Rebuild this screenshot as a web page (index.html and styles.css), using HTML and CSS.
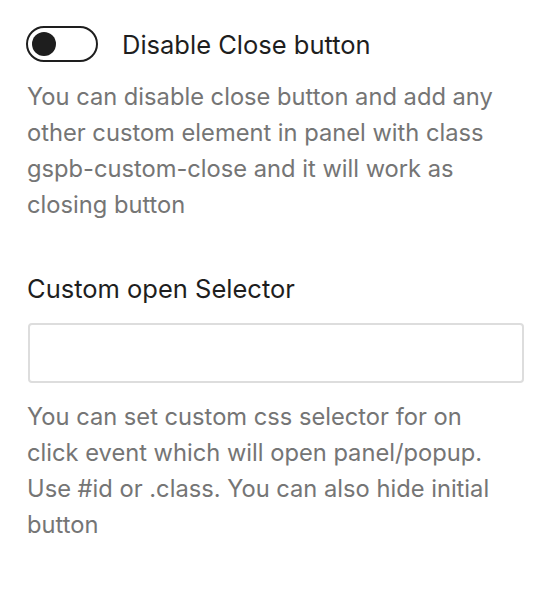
FILE: index.html
```html
<!DOCTYPE html>
<html lang="en">
<head>
    <meta charset="UTF-8">
    <meta name="viewport" content="width=device-width, initial-scale=1.0">
    <title>Panel settings</title>
    <link rel="stylesheet" href="styles.css">
</head>
<body>
    <div class="panel">
        <div class="field">
            <label class="toggle-row">
                <span class="toggle"><span class="knob"></span></span>
                <span class="toggle-label">Disable Close button</span>
            </label>
            <p class="help">You can disable close button and add any other custom element in panel with class gspb-custom-close and it will work as closing button</p>
        </div>
        <div class="field">
            <label class="field-label" for="openSelector">Custom open Selector</label>
            <input class="text-input" id="openSelector" type="text">
            <p class="help">You can set custom css selector for on click event which will open panel/popup. Use #id or .class. You can also hide initial button</p>
        </div>
        <div class="field last">
            <span class="field-label">Custom close Selector for other</span>
        </div>
    </div>
</body>
</html>
```

FILE: styles.css
```css
body { margin: 0; font-family: Inter, "Noto Sans", sans-serif; background: #fff; color: #1e1e1e; }
.panel { padding: 26px 26px 0 27px; }
.field { margin-bottom: 48px; }
.field.last { padding-top: 6px; }
.toggle-row { display: flex; align-items: center; gap: 24px; }
.toggle { box-sizing: border-box; width: 72px; height: 36px; border: 2.5px solid #1e1e1e; border-radius: 18px; display: flex; align-items: center; padding-left: 4px; margin-left: -1px; }
.knob { width: 24px; height: 24px; border-radius: 50%; background: #1e1e1e; }
.toggle-label { font-size: 25.5px; }
.help { margin: 17px 0 0; max-width: 478px; font-size: 23.7px; line-height: 36px; color: #757575; }
.field-label { display: block; font-size: 25.5px; line-height: 36px; }
.text-input { display: block; box-sizing: border-box; width: 496px; height: 60px; margin-top: 16px; margin-left: 1px; border: 2px solid #dddddd; border-radius: 4px; background: #fff; }
.field .text-input + .help { margin-top: 16px; }
```
